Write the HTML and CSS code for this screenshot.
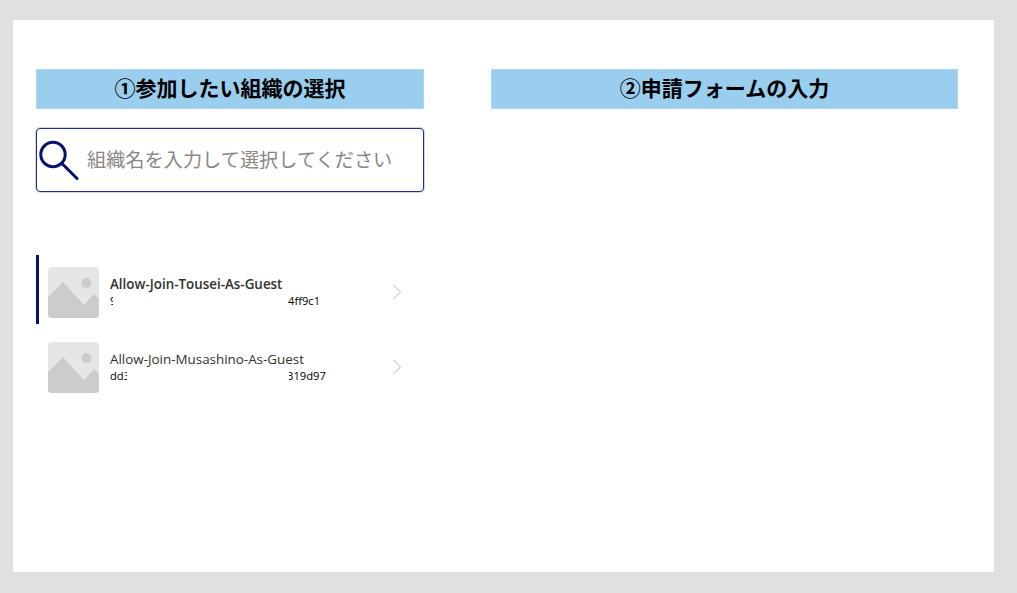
FILE: index.html
```html
<!DOCTYPE html>
<html lang="ja">
<head>
<meta charset="utf-8">
<title>組織の選択</title>
<link rel="stylesheet" href="styles.css">
</head>
<body>
<main class="canvas">
  <section class="col col-left">
    <h2 class="heading">①参加したい組織の選択</h2>
    <div class="search">
      <svg class="search-icon" width="42" height="42" viewBox="0 0 42 42" aria-hidden="true">
        <circle cx="16" cy="15.5" r="12.2" fill="none" stroke="#03136e" stroke-width="3"/>
        <line x1="25" y1="24.5" x2="40" y2="39.5" stroke="#03136e" stroke-width="3" stroke-linecap="round"/>
      </svg>
      <span class="placeholder">組織名を入力して選択してください</span>
    </div>
    <ul class="list">
      <li class="row row-selected">
        <svg class="thumb" width="51" height="51" viewBox="0 0 51 51" aria-hidden="true">
          <rect width="51" height="51" rx="4" fill="#e6e6e6"/>
          <circle cx="38.500" cy="16" r="5" fill="#cccccc"/>
          <path d="M0 30 L15 15 L36 38 L46 27 L51 32 V47 A4 4 0 0 1 47 51 H4 A4 4 0 0 1 0 47 Z" fill="#cccccc"/>
        </svg>
        <div class="info">
          <div class="name name-selected">Allow-Join-Tousei-As-Guest</div>
          <div class="id"><span class="id-a id-a1">9a</span><span class="id-b id-b1">4ff9c1</span></div>
        </div>
        <svg class="chev" width="10" height="16" viewBox="0 0 10 16" aria-hidden="true"><path d="M1.500 1 L8.500 8 L1.500 15" fill="none" stroke="#b5b5b5" stroke-width="1"/></svg>
      </li>
      <li class="row">
        <svg class="thumb" width="51" height="51" viewBox="0 0 51 51" aria-hidden="true">
          <rect width="51" height="51" rx="4" fill="#e6e6e6"/>
          <circle cx="38.500" cy="16" r="5" fill="#cccccc"/>
          <path d="M0 30 L15 15 L36 38 L46 27 L51 32 V47 A4 4 0 0 1 47 51 H4 A4 4 0 0 1 0 47 Z" fill="#cccccc"/>
        </svg>
        <div class="info">
          <div class="name">Allow-Join-Musashino-As-Guest</div>
          <div class="id"><span class="id-a id-a2">dd3</span><span class="id-b id-b2"><span class="id-clip">319d97</span></span></div>
        </div>
        <svg class="chev" width="10" height="16" viewBox="0 0 10 16" aria-hidden="true"><path d="M1.500 1 L8.500 8 L1.500 15" fill="none" stroke="#b5b5b5" stroke-width="1"/></svg>
      </li>
    </ul>
  </section>
  <section class="col col-right">
    <h2 class="heading">②申請フォームの入力</h2>
  </section>
</main>
</body>
</html>
```
FILE: styles.css
```css
* { box-sizing: border-box; }
html, body { margin: 0; height: 100%; }
body {
  width: 1017px;
  height: 593px;
  padding: 20px 23px 21px 13px;
  background: #e0e0e0;
  overflow: hidden;
  font-family: "Noto Sans CJK JP", "Noto Sans", sans-serif;
}
.canvas {
  display: flex;
  gap: 67px;
  height: 552px;
  padding: 49px 0 0 23px;
  background: #fff;
}
.col-left { width: 388px; }
.col-right { width: 467px; }
.heading {
  height: 40px;
  margin: 0;
  padding-top: 5px;
  background: #99ceee;
  border: 1px solid #aed8f2;
  color: #000;
  font-size: 21px;
  font-weight: 700;
  line-height: 24px;
  text-align: center;
}
.search {
  display: flex;
  align-items: center;
  height: 64px;
  margin-top: 19px;
  border: 1px solid #1f2e80;
  border-radius: 4px;
  box-shadow: 0 0 0 1px rgba(31, 46, 128, 0.2);
}
.search-icon { flex: none; margin-top: -1px; }
.placeholder {
  margin: -3px 0 0 8px;
  color: #8a8684;
  font-size: 19.200px;
  white-space: nowrap;
}
.list {
  margin: 63px 0 0;
  padding: 0;
  list-style: none;
}
.row {
  display: flex;
  align-items: center;
  height: 69px;
  margin-bottom: 6px;
  padding-left: 9px;
  border-left: 3px solid transparent;
}
.row-selected { border-left-color: #03136e; }
.thumb { flex: none; margin-top: 6px; }
.info {
  width: 278px;
  margin: 4px 0 0 11px;
  font-family: "Open Sans", sans-serif;
  font-size: 13.400px;
  line-height: 17px;
}
.name { color: #323130; white-space: nowrap; }
.name-selected { font-weight: 600; }
.id {
  display: flex;
  color: #000;
  font-size: 11.200px;
  line-height: 15px;
  white-space: nowrap;
}
.id-a { display: block; overflow: hidden; }
.id-b { display: block; }
.id-a1 { width: 3px; margin-right: 175px; }
.id-a2 { width: 17px; margin-right: 162px; }
.id-b2 { width: 37px; overflow: hidden; }
.id-clip { display: block; margin-left: -2px; }
.chev { flex: none; margin: 4px 0 0 4px; }
```
